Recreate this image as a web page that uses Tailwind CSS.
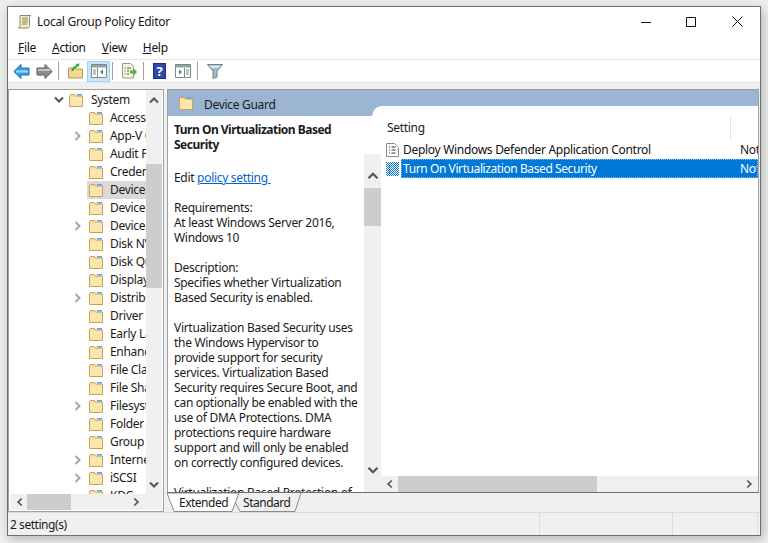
<!DOCTYPE html>
<html lang="en">
<head>
<meta charset="UTF-8">
<title>Local Group Policy Editor</title>
<script src="https://cdn.jsdelivr.net/npm/@tailwindcss/browser@4"></script>
</head>
<body class="w-[768px] h-[543px] overflow-hidden bg-[#edf1ed] pt-[6px] pl-[7px] font-['Noto_Sans',sans-serif] text-[12px] tracking-[-0.3px] text-[#1a1a1a]">
<svg class="hidden">
  <symbol id="folder" viewBox="0 0 14 14">
    <path d="M.5 13.500V2.500l1-1h4l1 1.500h7v10.500z" fill="#f9e09a" stroke="#c9a258"/>
    <path d="M1 4h12v9H1z" fill="#fbe7ab"/>
    <path d="M8 1h5v1.500H8z" fill="#5aa6e0"/>
  </symbol>
  <symbol id="right" viewBox="0 0 8 10"><path d="M1.500 1l4 4-4 4" fill="none" stroke="currentColor" stroke-width="2"/></symbol>
</svg>
<div class="flex flex-col w-[754px] h-[530px] bg-[#f0f0f0] border border-[#6f6f6f] shadow-[2px_3px_10px_rgba(0,0,0,0.25)]">
  <!-- title bar -->
  <div class="flex items-center h-[29px] bg-white shrink-0">
    <svg class="w-[15px] h-[15px] ml-[9px]" viewBox="0 0 15 15">
      <path d="M3 1.500h10.500c-1 .8-1 2-1 3v7c0 1.500-1 2.500-2 2.500H1.500c1-.5 1.500-1 1.500-2.500z" fill="#f4ecc8" stroke="#8d8664"/>
      <path d="M5 4h6M5 6h6M5 8h6M5 10h5" stroke="#8d8664"/>
    </svg>
    <span class="ml-[5px]">Local Group Policy Editor</span>
    <div class="ml-auto flex items-center">
      <svg class="w-[10px] h-[10px] mr-[35px]" viewBox="0 0 10 10"><path d="M0 5.500h10" stroke="#111"/></svg>
      <svg class="w-[10px] h-[10px] mr-[36px]" viewBox="0 0 10 10"><path d="M.5.500h9v9h-9z" fill="none" stroke="#111"/></svg>
      <svg class="w-[11px] h-[11px] mr-[17px]" viewBox="0 0 11 11"><path d="M.5.500l10 10M10.500.500l-10 10" stroke="#111"/></svg>
    </div>
  </div>
  <!-- menu -->
  <div class="flex items-center h-[23px] bg-white pl-[10px] gap-[16px] shrink-0 text-[#111]">
    <span><u>F</u>ile</span><span><u>A</u>ction</span><span><u>V</u>iew</span><span><u>H</u>elp</span>
  </div>
  <!-- toolbar -->
  <div class="flex items-center h-[24px] bg-white border-t border-[#e4e4e4] border-b border-b-[#e4e4e4] pl-[5px] shrink-0">
    <svg class="w-[17px] h-[15px]" viewBox="0 0 17 15"><path d="M8 .5L.8 7.500 8 14.500v-3.500h8V4H8z" fill="#3b9fe8" stroke="#1d6cb5"/><path d="M3 7.500h12" stroke="#9fd6fa" stroke-width="2"/></svg>
    <svg class="w-[17px] h-[15px] ml-[6px]" viewBox="0 0 17 15"><path d="M9 .5l7.200 7L9 14.500v-3.500H1V4h8z" fill="#8b8b8b" stroke="#5f5f5f"/><path d="M2 6h12" stroke="#c4c4c4" stroke-width="2"/></svg>
    <div class="w-px h-[18px] bg-[#a0a0a0] ml-[5px]"></div>
    <svg class="w-[15px] h-[16px] ml-[9px]" viewBox="0 0 15 16"><path d="M.5 15V5h5l1 1h8v9z" fill="#f5d98f" stroke="#b99a55"/><path d="M4 8c1-3 3-4 5-5" fill="none" stroke="#3aa23a" stroke-width="2"/><path d="M7.500 1l4-.5-1 4z" fill="#3aa23a"/></svg>
    <div class="flex items-center justify-center w-[23px] h-[21px] ml-[4px] bg-[#cce4f7] border border-[#99d1ff]">
      <svg class="w-[16px] h-[14px]" viewBox="0 0 16 14"><path d="M.5.5h15v13H.5z" fill="#fff" stroke="#7a8a8a"/><path d="M1 1h14v2.500H1z" fill="#8fa3a3"/><path d="M6.500 4v9" stroke="#7a8a8a"/><path d="M2 6h3M2 8h3M2 10h3" stroke="#7a8a8a"/><path d="M12 5.500v5L9 8z" fill="#2a9a3a"/></svg>
    </div>
    <div class="w-px h-[18px] bg-[#a0a0a0] ml-[2px]"></div>
    <svg class="w-[16px] h-[16px] ml-[8px]" viewBox="0 0 16 16"><path d="M1.500.5h8l3 3V15h-11z" fill="#f9f4dc" stroke="#9a9a86"/><path d="M3.500 5h1M3.500 8h1M3.500 11h1M6 5h4M6 8h2M6 11h2" stroke="#555"/><path d="M9 7.500h3.500V5l3.500 4-3.500 4v-2.500H9z" fill="#4fb648"/></svg>
    <div class="w-px h-[18px] bg-[#a0a0a0] ml-[6px]"></div>
    <div class="flex items-center justify-center w-[13px] h-[16px] ml-[9px] bg-[#2c4aa8] border border-[#1a2f80] text-white font-bold text-[13px] leading-none">?</div>
    <svg class="w-[16px] h-[14px] ml-[9px]" viewBox="0 0 16 14"><path d="M.5.5h15v13H.5z" fill="#fff" stroke="#7a8a8a"/><path d="M1 1h14v2.500H1z" fill="#8fa3a3"/><path d="M9.500 4v9" stroke="#7a8a8a"/><path d="M11 6h3M11 8h3M11 10h3" stroke="#7a8a8a"/><path d="M4 5.500v5L7 8z" fill="#2a9a3a"/></svg>
    <div class="w-px h-[18px] bg-[#a0a0a0] ml-[6px]"></div>
    <svg class="w-[16px] h-[15px] ml-[9px]" viewBox="0 0 16 15"><path d="M.5.500h15L10 7v6l-4 1.500V7z" fill="#a9bcc6" stroke="#6d7f89"/><path d="M2 1.500h12L11 4H5z" fill="#dbe6ec"/></svg>
  </div>
  <!-- panes -->
  <div class="flex flex-1 min-h-0 pt-[6px] gap-[3px]">
    <!-- tree -->
    <div class="flex flex-col w-[156px] h-[423px] bg-white border border-[#a0a0a0] ml-0 shrink-0">
      <div class="flex flex-1 min-h-0">
        <div class="flex-1 overflow-hidden whitespace-nowrap pt-px">
          <div class="flex items-center h-[18px] pl-[45px]"><svg class="w-[10px] h-[8px] text-[#555]" viewBox="0 0 10 8"><path d="M1 1.500l4 4 4-4" fill="none" stroke="currentColor" stroke-width="2"/></svg><svg class="w-[14px] h-[14px] ml-[5px]"><use href="#folder"/></svg><span class="ml-[8px]">System</span></div>
          <div class="flex items-center h-[18px] pl-[80px]"><svg class="w-[14px] h-[14px] shrink-0"><use href="#folder"/></svg><span class="ml-[7px]">Access Control</span></div>
          <div class="flex items-center h-[18px] pl-[65px]"><svg class="w-[8px] h-[10px] mr-[7px] text-[#a6a6a6] shrink-0"><use href="#right"/></svg><svg class="w-[14px] h-[14px] shrink-0"><use href="#folder"/></svg><span class="ml-[7px]">App-V Client</span></div>
          <div class="flex items-center h-[18px] pl-[80px]"><svg class="w-[14px] h-[14px] shrink-0"><use href="#folder"/></svg><span class="ml-[7px]">Audit Process</span></div>
          <div class="flex items-center h-[18px] pl-[80px]"><svg class="w-[14px] h-[14px] shrink-0"><use href="#folder"/></svg><span class="ml-[7px]">Credentials</span></div>
          <div class="flex items-center h-[18px] pl-[78px]"><div class="flex items-center flex-1 h-[18px] pl-[2px] bg-[#d9d9d9]"><svg class="w-[14px] h-[14px] shrink-0"><use href="#folder"/></svg><span class="ml-[7px]">Device Guard</span></div></div>
          <div class="flex items-center h-[18px] pl-[80px]"><svg class="w-[14px] h-[14px] shrink-0"><use href="#folder"/></svg><span class="ml-[7px]">Device Health</span></div>
          <div class="flex items-center h-[18px] pl-[65px]"><svg class="w-[8px] h-[10px] mr-[7px] text-[#a6a6a6] shrink-0"><use href="#right"/></svg><svg class="w-[14px] h-[14px] shrink-0"><use href="#folder"/></svg><span class="ml-[7px]">Device Install</span></div>
          <div class="flex items-center h-[18px] pl-[80px]"><svg class="w-[14px] h-[14px] shrink-0"><use href="#folder"/></svg><span class="ml-[7px]">Disk NV Cache</span></div>
          <div class="flex items-center h-[18px] pl-[80px]"><svg class="w-[14px] h-[14px] shrink-0"><use href="#folder"/></svg><span class="ml-[7px]">Disk Quotas</span></div>
          <div class="flex items-center h-[18px] pl-[80px]"><svg class="w-[14px] h-[14px] shrink-0"><use href="#folder"/></svg><span class="ml-[7px]">Display</span></div>
          <div class="flex items-center h-[18px] pl-[65px]"><svg class="w-[8px] h-[10px] mr-[7px] text-[#a6a6a6] shrink-0"><use href="#right"/></svg><svg class="w-[14px] h-[14px] shrink-0"><use href="#folder"/></svg><span class="ml-[7px]">Distributed</span></div>
          <div class="flex items-center h-[18px] pl-[80px]"><svg class="w-[14px] h-[14px] shrink-0"><use href="#folder"/></svg><span class="ml-[7px]">Driver Install</span></div>
          <div class="flex items-center h-[18px] pl-[80px]"><svg class="w-[14px] h-[14px] shrink-0"><use href="#folder"/></svg><span class="ml-[7px]">Early Launch</span></div>
          <div class="flex items-center h-[18px] pl-[80px]"><svg class="w-[14px] h-[14px] shrink-0"><use href="#folder"/></svg><span class="ml-[7px]">Enhanced</span></div>
          <div class="flex items-center h-[18px] pl-[80px]"><svg class="w-[14px] h-[14px] shrink-0"><use href="#folder"/></svg><span class="ml-[7px]">File Class</span></div>
          <div class="flex items-center h-[18px] pl-[80px]"><svg class="w-[14px] h-[14px] shrink-0"><use href="#folder"/></svg><span class="ml-[7px]">File Share</span></div>
          <div class="flex items-center h-[18px] pl-[65px]"><svg class="w-[8px] h-[10px] mr-[7px] text-[#a6a6a6] shrink-0"><use href="#right"/></svg><svg class="w-[14px] h-[14px] shrink-0"><use href="#folder"/></svg><span class="ml-[7px]">Filesystem</span></div>
          <div class="flex items-center h-[18px] pl-[80px]"><svg class="w-[14px] h-[14px] shrink-0"><use href="#folder"/></svg><span class="ml-[7px]">Folder Redirect</span></div>
          <div class="flex items-center h-[18px] pl-[80px]"><svg class="w-[14px] h-[14px] shrink-0"><use href="#folder"/></svg><span class="ml-[7px]">Group Policy</span></div>
          <div class="flex items-center h-[18px] pl-[65px]"><svg class="w-[8px] h-[10px] mr-[7px] text-[#a6a6a6] shrink-0"><use href="#right"/></svg><svg class="w-[14px] h-[14px] shrink-0"><use href="#folder"/></svg><span class="ml-[7px]">Internet</span></div>
          <div class="flex items-center h-[18px] pl-[65px]"><svg class="w-[8px] h-[10px] mr-[7px] text-[#a6a6a6] shrink-0"><use href="#right"/></svg><svg class="w-[14px] h-[14px] shrink-0"><use href="#folder"/></svg><span class="ml-[7px]">iSCSI</span></div>
          <div class="flex items-center h-[18px] pl-[80px]"><svg class="w-[14px] h-[14px] shrink-0"><use href="#folder"/></svg><span class="ml-[7px]">KDC</span></div>
        </div>
        <!-- tree v scrollbar -->
        <div class="flex flex-col items-center w-[16px] mr-px bg-[#f0f0f0] shrink-0 text-[#555]">
          <svg class="w-[10px] h-[8px] mt-[6px]" viewBox="0 0 10 8"><path d="M1 6.500l4-4 4 4" fill="none" stroke="currentColor" stroke-width="2"/></svg>
          <div class="w-full h-[124px] mt-[60px] bg-[#cdcdcd]"></div>
          <svg class="w-[10px] h-[8px] mt-auto mb-[5px]" viewBox="0 0 10 8"><path d="M1 1.500l4 4 4-4" fill="none" stroke="currentColor" stroke-width="2"/></svg>
        </div>
      </div>
      <!-- tree h scrollbar -->
      <div class="flex items-center h-[16px] mb-px mx-px bg-[#f0f0f0] shrink-0 text-[#555]">
        <svg class="w-[7px] h-[10px] ml-[6px] -scale-x-100"><use href="#right"/></svg>
        <div class="w-[44px] h-full ml-[4px] bg-[#cdcdcd]"></div>
        <svg class="w-[7px] h-[10px] ml-auto mr-[22px]"><use href="#right"/></svg>
      </div>
    </div>
    <!-- right -->
    <div class="flex flex-col flex-1 min-w-0 h-[423px] pr-px">
      <div class="flex flex-col flex-1 min-h-0 bg-white border border-[#a0a0a0]">
        <div class="flex items-start h-[26px] bg-[#9bb5d3] pl-[11px] pt-[6px] shrink-0">
          <svg class="w-[14px] h-[14px]"><use href="#folder"/></svg><span class="ml-[11px]">Device Guard</span>
        </div>
        <div class="flex flex-1 min-h-0">
          <div class="w-[196px] pl-[6px] pt-[6px] overflow-hidden whitespace-nowrap leading-[15px] shrink-0">
            <p class="font-bold tracking-[-0.5px]">Turn On Virtualization Based<br>Security</p>
            <p class="mt-[18px]">Edit <a class="text-[#0066cc] underline">policy setting&nbsp;</a></p>
            <p class="mt-[15px]">Requirements:<br>At least Windows Server 2016,<br>Windows 10</p>
            <p class="mt-[15px]">Description:<br>Specifies whether Virtualization<br>Based Security is enabled.</p>
            <p class="mt-[15px]">Virtualization Based Security uses<br>the Windows Hypervisor to<br>provide support for security<br>services. Virtualization Based<br>Security requires Secure Boot, and<br>can optionally be enabled with the<br>use of DMA Protections. DMA<br>protections require hardware<br>support and will only be enabled<br>on correctly configured devices.</p>
            <p class="mt-[15px]">Virtualization Based Protection of</p>
          </div>
          <!-- description scrollbar -->
          <div class="relative z-10 flex flex-col items-center w-[17px] mt-[38px] bg-[#f0f0f0] shrink-0 text-[#555]">
            <svg class="w-[12px] h-[9px] mt-[17px]" viewBox="0 0 10 8"><path d="M1 6.500l4-4 4 4" fill="none" stroke="currentColor" stroke-width="2"/></svg>
            <div class="w-full h-[38px] mt-[8px] bg-[#cdcdcd]"></div>
            <svg class="w-[12px] h-[9px] mt-auto mb-[17px]" viewBox="0 0 10 8"><path d="M1 1.500l4 4 4-4" fill="none" stroke="currentColor" stroke-width="2"/></svg>
          </div>
          <!-- list -->
          <div class="flex flex-col flex-1 min-w-0 -mt-[10px] -ml-[9px] pl-[9px] rounded-tl-[10px] bg-white">
            <div class="flex flex-1 flex-col min-h-0 overflow-hidden whitespace-nowrap">
              <div class="flex items-center h-[34px] pl-[6px] pt-[10px] shrink-0">Setting<div class="ml-auto w-px h-[24px] bg-[#e4e4e4] mr-[27px]"></div></div>
              <div class="flex items-center h-[19px] pl-[5px] shrink-0">
                <svg class="w-[13px] h-[14px] shrink-0" viewBox="0 0 13 14"><path d="M.5.5h8l4 4v9H.5z" fill="#fff" stroke="#8a8a8a"/><path d="M3 4h1M3 7h1M3 10h1M5.500 4h4M5.500 7h4M5.500 10h4" stroke="#333"/></svg>
                <span class="ml-[4px] w-[337px] shrink-0 text-[#111]">Deploy Windows Defender Application Control</span><span>Not configured</span>
              </div>
              <div class="flex items-center h-[19px] pl-[5px] shrink-0">
                <svg class="w-[13px] h-[14px] shrink-0" viewBox="0 0 13 14">
                  <defs><pattern id="dither" width="2" height="2" patternUnits="userSpaceOnUse"><rect width="2" height="2" fill="#fff"/><rect width="1" height="1" fill="#0078d7"/><rect x="1" y="1" width="1" height="1" fill="#0078d7"/></pattern></defs>
                  <path d="M0 0h13v14H0z" fill="url(#dither)"/><path d="M3 5h1M3 8h1M3 11h1" stroke="#223"/>
                </svg>
                <div class="flex items-center flex-1 h-full ml-[2px] bg-[#0078d7] border border-dotted border-[#8dbfe8] text-white overflow-hidden">
                  <span class="ml-px w-[337px] shrink-0 tracking-[-0.41px]">Turn On Virtualization Based Security</span><span>Not configured</span>
                </div>
              </div>
            </div>
            <!-- list h scrollbar -->
            <div class="flex items-center h-[16px] bg-[#f0f0f0] shrink-0 text-[#555]">
              <svg class="w-[7px] h-[10px] ml-[5px] -scale-x-100"><use href="#right"/></svg>
              <div class="w-[199px] h-full ml-[5px] bg-[#cdcdcd]"></div>
              <svg class="w-[7px] h-[10px] ml-auto mr-[5px]"><use href="#right"/></svg>
            </div>
          </div>
        </div>
      </div>
      <!-- tabs -->
      <div class="relative flex items-center h-[20px] shrink-0 border-t border-[#6f6f6f] -mt-px pl-[12px] tracking-[-0.5px]">
        <svg class="absolute left-0 top-0 w-[140px] h-[20px]" viewBox="0 0 140 20">
          <path d="M0 0L7 18.500H65L72 0z" fill="#fff" stroke="#8a8a8a"/>
          <path d="M68.500 10L73 18.500H128L134 0" fill="none" stroke="#8a8a8a"/>
        </svg>
        <span class="relative">Extended</span>
        <span class="relative ml-[15px]">Standard</span>
      </div>
    </div>
  </div>
  <!-- status bar -->
  <div class="flex items-stretch h-[23px] mt-px border-t border-[#dcdcdc] shrink-0">
    <span class="w-[532px] pl-[2px] pt-[3px] border-r border-[#dcdcdc] tracking-[-0.45px]">2 setting(s)</span>
    <span class="w-[133px] border-r border-[#dcdcdc]"></span>
    <span class="w-[85px] border-r border-[#dcdcdc]"></span>
  </div>
</div>
</body>
</html>
